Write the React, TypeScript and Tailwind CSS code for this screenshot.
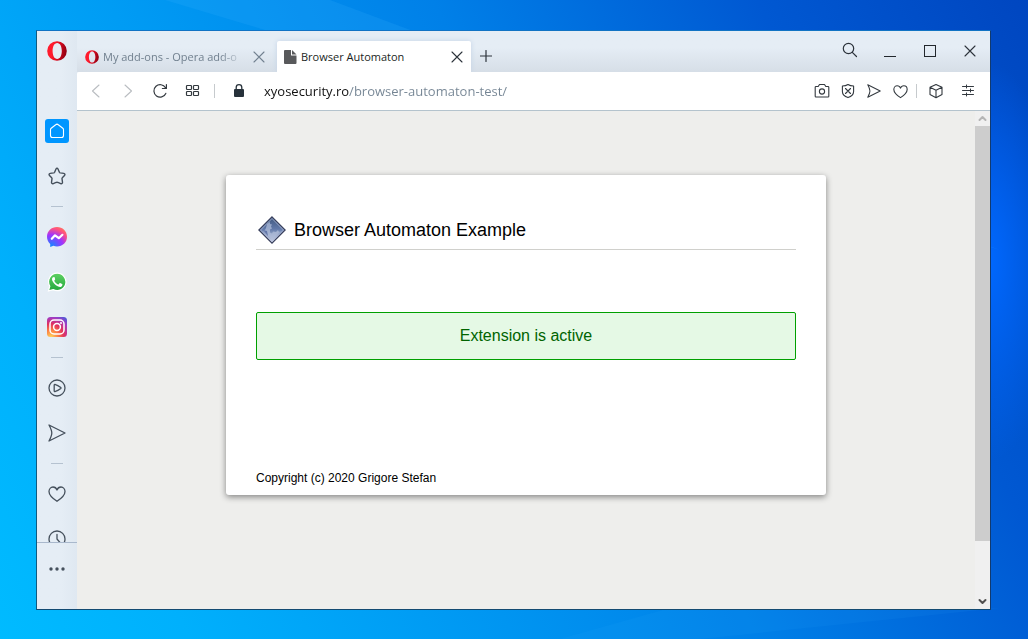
import type { ReactNode } from "react";

type IconButtonProps = { label: string; className?: string; children: ReactNode };

function IconButton({ label, className = "", children }: IconButtonProps) {
  return (
    <button type="button" aria-label={label} className={`flex shrink-0 items-center justify-center ${className}`}>
      {children}
    </button>
  );
}

type LineProps = { size?: string; box?: number; width?: number; children: ReactNode };

function Line({ size = "size-4", box = 16, width = 1.1, children }: LineProps) {
  return (
    <svg
      className={size}
      viewBox={`0 0 ${box} ${box}`}
      fill="none"
      stroke="currentColor"
      strokeWidth={width}
      strokeLinejoin="round"
      strokeLinecap="round"
      aria-hidden="true"
    >
      {children}
    </svg>
  );
}

function OperaLogo({ className, id }: { className: string; id: string }) {
  return (
    <svg viewBox="0 0 20 20" className={className} aria-hidden="true">
      <defs>
        <linearGradient id={id} x1="0" x2="1" y1="0.3" y2="0.5">
          <stop offset="0.3" stopColor="#ff1b2d" />
          <stop offset="0.62" stopColor="#d3091d" />
          <stop offset="1" stopColor="#8f0012" />
        </linearGradient>
      </defs>
      <path
        fill={`url(#${id})`}
        fillRule="evenodd"
        d="M10 .2a9.800 9.800 0 1 0 0 19.600a9.800 9.800 0 1 0 0-19.600zM10.200 2c2.900 0 4.600 3.600 4.600 8s-1.700 8-4.600 8S5.600 14.400 5.600 10s1.700-8 4.600-8z"
      />
    </svg>
  );
}

function CloseGlyph() {
  return (
    <Line size="size-3" box={12} width={1.1}>
      <path d="M1 1l10 10M11 1L1 11" />
    </Line>
  );
}

function HeartGlyph({ size }: { size: string }) {
  return (
    <Line size={size} box={18} width={1.3}>
      <path d="M9 16.300C5.500 14 1 10.700 1 6.500 1 4 2.800 2 5 2c1.800 0 3.300 1 4 3 .7-2 2.200-3 4-3 2.200 0 4 2 4 4.500 0 4.200-4.500 7.500-8 9.800z" />
    </Line>
  );
}

function SendGlyph({ size }: { size: string }) {
  return (
    <Line size={size} box={18} width={1.3}>
      <path d="M1 1l16 8L1 17c1.700-3.200 2.800-5.300 2.800-8S2.700 4.200 1 1z" />
    </Line>
  );
}

function SideDivider() {
  return (
    <div className="flex h-4 shrink-0 items-center justify-center">
      <div className="h-px w-3 bg-[#b5c2d0]" />
    </div>
  );
}

function Sidebar() {
  const cell = "h-[45px] w-full";
  return (
    <nav aria-label="Sidebar" className="flex w-10 shrink-0 flex-col bg-linear-to-r from-[#e5edf5] from-60% to-[#dfe8f1] text-[#45505c]">
      <IconButton label="Opera menu" className="h-10 w-full">
        <OperaLogo className="size-5" id="opera-main" />
      </IconButton>
      <div className="mt-[37px] flex min-h-0 flex-1 flex-col overflow-hidden">
        <IconButton label="Home" className={cell}>
          <span className="flex size-6 items-center justify-center rounded-[3px] bg-[#0096ff] text-white">
            <Line>
              <path d="M8 1.100a1.500 1.500 0 0 1 1 .4l4.800 3.800c.5.400.7.800.7 1.400V12.500a2 2 0 0 1-2 2h-9a2 2 0 0 1-2-2V6.700c0-.6.2-1 .7-1.400L7 1.500a1.500 1.500 0 0 1 1-.4z" />
            </Line>
          </span>
        </IconButton>
        <IconButton label="Bookmarks" className={cell}>
          <Line size="size-[18px]" box={18} width={1.4}>
            <path d="M9 1.200c.5 0 .8.400 1 .8L11.400 5.200c.2.400.5.600.9.700l3.500.5c1.200.2 1.500 1.200.7 2L14.300 10.700c-.3.300-.4.600-.3 1l.5 3.600c.1 1.100-.8 1.800-1.800 1.300L10.500 15.600c-1-.4-2-.4-3 0L5.300 16.600c-1 .5-1.900-.2-1.800-1.300L4 11.700c.1-.4 0-.7-.3-1L1.500 8.400c-.8-.8-.5-1.800.7-2l3.500-.5c.4-.1.7-.3.900-.7L8 2c.2-.4.5-.8 1-.8z" />
          </Line>
        </IconButton>
        <SideDivider />
        <IconButton label="Messenger" className={cell}>
          <svg viewBox="0 0 20 20" className="size-5" aria-hidden="true">
            <defs>
              <radialGradient id="messenger" cx="0.2" cy="1" r="1.100">
                <stop offset="0" stopColor="#0a8cff" />
                <stop offset="0.55" stopColor="#a033ff" />
                <stop offset="0.85" stopColor="#ff5280" />
                <stop offset="1" stopColor="#ff7061" />
              </radialGradient>
            </defs>
            <path
              fill="url(#messenger)"
              d="M10 0C4.400 0 0 4.100 0 9.700c0 2.900 1.200 5.400 3.200 7.200V20l3.200-1.200c1.100.4 2.300.600 3.600.600 5.600 0 10-4.100 10-9.700S15.600 0 10 0z"
            />
            <path fill="none" stroke="#fff" strokeWidth="2.200" strokeLinejoin="round" strokeLinecap="round" d="M4.800 11.800L8 8.300l3.800 2.900 3.600-3.400" />
          </svg>
        </IconButton>
        <IconButton label="WhatsApp" className={cell}>
          <svg viewBox="0 0 20 20" className="size-5" aria-hidden="true">
            <defs>
              <linearGradient id="whatsapp" x1="0" x2="0" y1="0" y2="1">
                <stop offset="0" stopColor="#5fd163" />
                <stop offset="1" stopColor="#22a83c" />
              </linearGradient>
            </defs>
            <path
              fill="url(#whatsapp)"
              stroke="#fff"
              strokeWidth="1.200"
              d="M10.200 1.200a8.600 8.600 0 0 0-7.400 13L1.500 18.800l4.700-1.200A8.700 8.700 0 1 0 10.200 1.200z"
            />
            <path
              fill="#fff"
              d="M7.700 5.500c-.3-.6-.5-.6-.8-.6-.8 0-1.900.8-1.900 2.400 0 1 .5 2 1.200 3 1.500 2.200 3.200 3.700 5.700 4.500 1.700.5 3.300-.5 3.500-1.900.1-.5 0-.7-.3-.9l-1.900-.9c-.3-.1-.5-.1-.7.2l-.8 1c-.2.200-.4.200-.7.100-1.700-.7-2.900-1.800-3.700-3.300-.1-.3 0-.4.100-.6l.7-.9c.1-.2.100-.4 0-.6z"
            />
          </svg>
        </IconButton>
        <IconButton label="Instagram" className={cell}>
          <svg viewBox="0 0 20 20" className="size-5" aria-hidden="true">
            <defs>
              <radialGradient id="instagram" cx="0.2" cy="1" r="1.200">
                <stop offset="0" stopColor="#ffd35a" />
                <stop offset="0.3" stopColor="#fb7d43" />
                <stop offset="0.55" stopColor="#e0305f" />
                <stop offset="0.8" stopColor="#a53ac0" />
                <stop offset="1" stopColor="#4d5bd8" />
              </radialGradient>
            </defs>
            <rect width="20" height="20" rx="3.500" fill="url(#instagram)" />
            <g fill="none" stroke="#fff" strokeWidth="1.500">
              <rect x="3" y="3" width="14" height="14" rx="4" />
              <circle cx="10" cy="10" r="3.400" />
            </g>
            <circle cx="14" cy="6" r="1" fill="#fff" />
          </svg>
        </IconButton>
        <SideDivider />
        <IconButton label="Player" className={cell}>
          <Line size="size-[18px]" box={18} width={1.3}>
            <circle cx="9" cy="9" r="8" />
            <path d="M6.200 5.900c0-.4.300-.6.700-.5C9 6 10.700 6.900 12.800 8.500c.3.300.3.700 0 1C10.700 11.100 9 12 6.900 12.600c-.4.100-.7-.1-.7-.5z" />
          </Line>
        </IconButton>
        <IconButton label="My Flow" className={cell}>
          <SendGlyph size="size-[18px]" />
        </IconButton>
        <SideDivider />
        <IconButton label="Favorites" className={cell}>
          <HeartGlyph size="size-[18px]" />
        </IconButton>
        <IconButton label="History" className={cell}>
          <Line size="size-[18px]" box={18} width={1.3}>
            <circle cx="9" cy="9" r="8" />
            <path d="M9 4.500V9l3 3.500" />
          </Line>
        </IconButton>
      </div>
      <div className="h-[67px] border-t border-[#a9b8cc] pt-4">
        <IconButton label="Sidebar setup" className="h-5 w-full">
          <svg viewBox="0 0 16 4" className="h-1 w-4" fill="currentColor" aria-hidden="true">
            <circle cx="2" cy="2" r="1.700" />
            <circle cx="8" cy="2" r="1.700" />
            <circle cx="14" cy="2" r="1.700" />
          </svg>
        </IconButton>
      </div>
    </nav>
  );
}

function TabBar() {
  return (
    <header className="flex h-[41px] shrink-0 items-start bg-linear-to-b from-[#e5edf5] from-40% to-[#d6dee7] text-[#2c333b]">
      <div className="mt-[10px] flex h-[31px] w-[200px] items-center pr-3 pl-2 text-[#71808f]">
        <OperaLogo className="mr-1 size-[14px] shrink-0" id="opera-tab" />
        <a
          href="#addons"
          className="flex-1 whitespace-nowrap text-[11px] leading-4 [mask-image:linear-gradient(to_right,black_82%,transparent)]"
        >
          My add-ons - Opera add-o
        </a>
        <IconButton label="Close My add-ons" className="ml-2 size-3">
          <CloseGlyph />
        </IconButton>
      </div>
      <div className="mt-[10px] flex h-[31px] w-[194px] items-center rounded-t-[2px] bg-white pr-2 pl-[7px] shadow-[0_0_5px_#c3d2e6] [clip-path:inset(-6px_-6px_0_-6px)]">
        <svg viewBox="0 0 13 14" className="mr-1 h-[14px] w-[13px] shrink-0" fill="#58595b" aria-hidden="true">
          <path d="M1 0h6v5.500h5.500V13a1 1 0 0 1-1 1H1a1 1 0 0 1-1-1V1a1 1 0 0 1 1-1z" />
          <path d="M8 0l4.500 4.500H8z" />
        </svg>
        <a href="#automaton" className="flex-1 whitespace-nowrap text-[11px] leading-4 text-[#1c1f24]">
          Browser Automaton
        </a>
        <IconButton label="Close Browser Automaton" className="size-3">
          <CloseGlyph />
        </IconButton>
      </div>
      <IconButton label="New tab" className="mt-[10px] size-[30px]">
        <Line size="size-3" box={12} width={1.2}>
          <path d="M6 .5v11M.5 6h11" />
        </Line>
      </IconButton>
      <div className="ml-auto flex">
        <IconButton label="Search tabs" className="h-[38px] w-10">
          <Line width={1.2}>
            <circle cx="6.500" cy="6.500" r="5.200" />
            <path d="M10.300 10.300L14.500 14.500" />
          </Line>
        </IconButton>
        <IconButton label="Minimize" className="h-10 w-10">
          <span className="mt-[10px] h-px w-3 bg-[#22272c]" />
        </IconButton>
        <IconButton label="Maximize" className="h-10 w-10">
          <span className="size-3 border border-[#22272c]" />
        </IconButton>
        <IconButton label="Close window" className="h-10 w-10">
          <CloseGlyph />
        </IconButton>
      </div>
    </header>
  );
}

function Toolbar() {
  return (
    <div className="flex h-[39px] shrink-0 items-center rounded-tl-[2px] border-b border-[#b4c3cd] bg-white pr-[6px] pl-[3px] text-[#33393f]">
      <IconButton label="Back" className="h-8 w-8 text-[#b9bdc1]">
        <Line>
          <path d="M11 2L4.500 8l6.500 6" />
        </Line>
      </IconButton>
      <IconButton label="Forward" className="h-8 w-8 text-[#b9bdc1]">
        <Line>
          <path d="M5 2l6.500 6L5 14" />
        </Line>
      </IconButton>
      <IconButton label="Reload" className="h-8 w-8">
        <Line width={1.2}>
          <path d="M13.800 10.400A6.200 6.200 0 1 1 13.500 4.800M14.400 1.500v4h-4" />
        </Line>
      </IconButton>
      <IconButton label="Speed Dial" className="h-8 w-8">
        <Line width={1.2}>
          <rect x="2.500" y="2.500" width="5" height="4" rx="0.800" />
          <rect x="9.500" y="2.500" width="5" height="4" rx="0.800" />
          <rect x="2.500" y="8.500" width="5" height="4" rx="0.800" />
          <rect x="9.500" y="8.500" width="5" height="4" rx="0.800" />
        </Line>
      </IconButton>
      <span className="ml-[6px] h-[14px] w-px bg-[#c6cacd]" />
      <IconButton label="Site information" className="ml-2 h-8 w-8">
        <svg viewBox="0 0 16 16" className="size-4" aria-hidden="true">
          <path fill="none" stroke="#27323b" strokeWidth="1.300" d="M5.200 7V4.500a2.800 2.800 0 0 1 5.600 0V7" />
          <rect x="3" y="6" width="10" height="8" rx="1" fill="#27323b" />
        </svg>
      </IconButton>
      <input
        type="text"
        aria-label="Address"
        defaultValue="xyosecurity.ro/browser-automaton-test/"
        className="ml-[9px] h-6 min-w-0 flex-1 bg-[linear-gradient(to_right,#111_85px,#748493_85px)] bg-clip-text text-[13px] leading-6 text-transparent outline-none"
      />
      <IconButton label="Snapshot" className="h-8 w-[26px]">
        <Line>
          <path d="M2 3.500h2.200l1.300-2h5l1.300 2H14a.8.8 0 0 1 .8.800v8.900a.8.8 0 0 1-.8.800H2a.8.800 0 0 1-.8-.8V4.300a.8.800 0 0 1 .8-.8z" />
          <circle cx="8" cy="8.500" r="2.600" />
        </Line>
      </IconButton>
      <IconButton label="Ad blocker" className="h-8 w-[26px]">
        <Line>
          <path d="M8 1.500c1.500 1 3.500 1.500 5.600 1.500v5.500c0 3.200-2.200 4.900-5.600 6.100-3.400-1.200-5.600-2.900-5.600-6.100V3C4.500 3 6.500 2.500 8 1.500zM5.500 5.500l5 5M10.500 5.500l-5 5" />
        </Line>
      </IconButton>
      <IconButton label="Send to My Flow" className="h-8 w-[26px]">
        <SendGlyph size="size-[14px]" />
      </IconButton>
      <IconButton label="Add to favorites" className="h-8 w-[26px]">
        <HeartGlyph size="size-[15px]" />
      </IconButton>
      <span className="mx-[3px] h-[14px] w-px bg-[#c6cacd]" />
      <IconButton label="Extensions" className="h-8 w-8">
        <Line>
          <path d="M8 1.500l6 2.800v7.200l-6 3.200-6-3.200V4.300zM2 4.300l6 3 6-3M8 7.300v7.400" />
        </Line>
      </IconButton>
      <IconButton label="Easy setup" className="h-8 w-8">
        <Line width={1}>
          <path d="M2.500 3.500h11M2.500 7.500h11M2.500 11.500h11M6.500 2v3M10.500 6v3M6.500 10v3" />
        </Line>
      </IconButton>
    </div>
  );
}

function DiamondLogo() {
  return (
    <svg viewBox="0 0 28 28" className="size-7" aria-hidden="true">
      <defs>
        <linearGradient id="diamond" x1="0" x2="0" y1="0" y2="1">
          <stop offset="0" stopColor="#40587f" />
          <stop offset="0.45" stopColor="#6078a8" />
          <stop offset="1" stopColor="#d3d8ec" />
        </linearGradient>
      </defs>
      <path d="M14 .8L27.200 14 14 27.200.8 14z" fill="url(#diamond)" stroke="#343b58" strokeWidth="1.100" />
      <path d="M14 2.500L25.500 14 14 25.500 2.500 14z" fill="none" stroke="#b9c3dc" strokeWidth="0.700" />
      <path
        d="M9 8l3-2v2l2 .5-1 2 1 2-2 1v3l2 1 1-2 3 .5 2-2 1 2 2-1-8.500 9L5 15l2-1 1-2z"
        fill="#b4c0dc"
        opacity="0.700"
      />
      <path d="M5 14l4 1 1 5z" fill="#5268a0" opacity="0.800" />
    </svg>
  );
}

function Page() {
  return (
    <div className="flex min-h-0 flex-1 bg-[#eeeeec] font-['Liberation_Sans',Arial,sans-serif] text-black">
      <main className="min-w-0 flex-1 pt-16">
        <section className="mx-auto flex min-h-80 w-full max-w-[600px] flex-col rounded-[3px] bg-white px-[30px] pt-9 pb-2 shadow-[0_2px_6px_rgba(0,0,0,0.45)]">
          <h1 className="flex h-[39px] items-center gap-2 border-b border-[#d0d0cc] pl-[2px] text-[18px] leading-6">
            <DiamondLogo />
            Browser Automaton Example
          </h1>
          <p
            role="status"
            className="mt-[62px] rounded-[2px] border border-[#00a000] bg-[#e5f9e5] py-[11px] text-center text-[16px] leading-6 text-[#006400]"
          >
            Extension is active
          </p>
          <footer className="mt-auto text-[12px] leading-[18px]">Copyright (c) 2020 Grigore Stefan</footer>
        </section>
      </main>
      <div className="flex w-[15px] shrink-0 flex-col bg-[#f0f0f0]" role="presentation">
        <div className="flex h-[15px] items-center justify-center text-[#b5b5b5]">
          <Line size="size-[9px]" box={9} width={2}>
            <path d="M1.500 6l3-3 3 3" />
          </Line>
        </div>
        <div className="flex-1">
          <div className="h-[88.7%] bg-[#cdcdcd]" />
        </div>
        <div className="flex h-[15px] items-center justify-center text-[#505050]">
          <Line size="size-[9px]" box={9} width={2}>
            <path d="M1.500 3l3 3 3-3" />
          </Line>
        </div>
      </div>
    </div>
  );
}

function WallpaperRays() {
  return (
    <svg
      viewBox="0 0 1028 639"
      preserveAspectRatio="none"
      className="pointer-events-none absolute inset-0 size-full"
      aria-hidden="true"
    >
      <path d="M165 0H330L1000 250z" fill="#35b4ff" opacity="0.180" />
      <path d="M560 639L670 608H1000L700 639z" fill="#35b4ff" opacity="0.080" />
    </svg>
  );
}

export default function App() {
  return (
    <div className="relative flex h-screen bg-[radial-gradient(ellipse_75px_200px_at_96%_41%,#0068ff,transparent),linear-gradient(63deg,#00bbff_0%,#00b0fc_14%,#009cf4_32%,#0080e8_56%,#0058d2_80%,#0046c0_100%)] pt-[30px] pr-[37px] pb-[29px] pl-9 font-['Open_Sans','Noto_Sans',sans-serif]">
      <WallpaperRays />
      <div className="relative flex min-w-0 flex-1 border border-t-[#1173c4] border-r-[#123a6e] border-b-[#124a72] border-l-[#0f5a80] bg-[#e5edf5]">
        <Sidebar />
        <div className="flex min-w-0 flex-1 flex-col">
          <TabBar />
          <Toolbar />
          <Page />
        </div>
      </div>
    </div>
  );
}
